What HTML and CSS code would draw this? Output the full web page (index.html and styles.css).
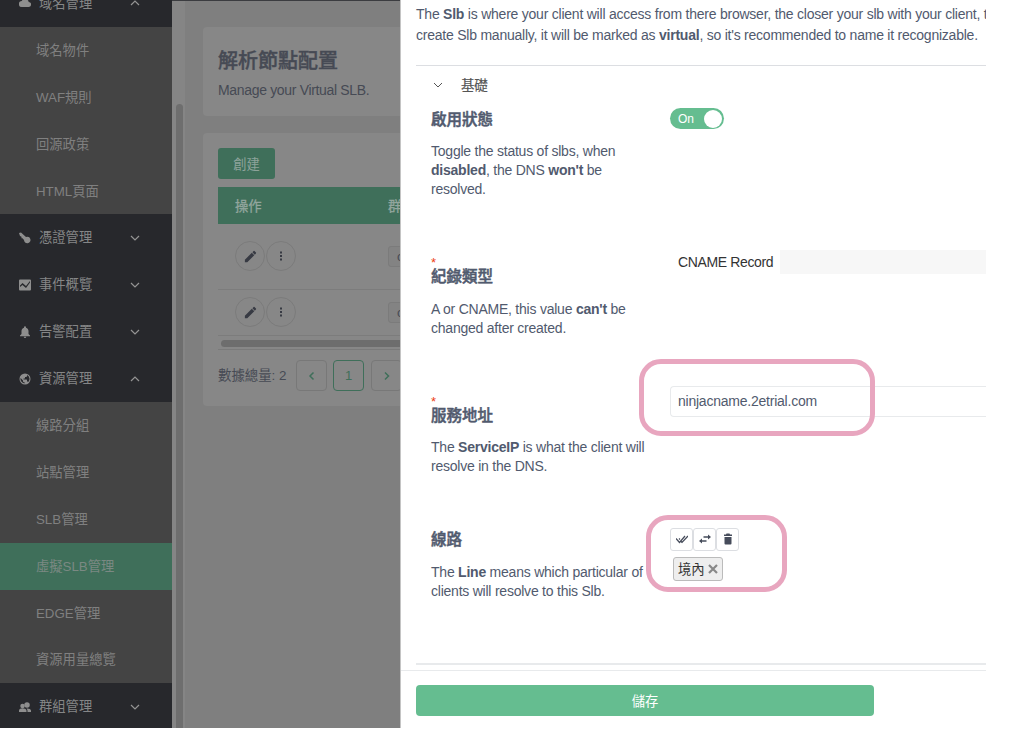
FILE: index.html
```
<!DOCTYPE html>
<html lang="zh-Hant">
<head>
  <meta charset="UTF-8">
  <title>解析節點配置</title>
  <link rel="stylesheet" href="styles.css">
</head>
<body>

  <div class="app">
    <nav class="sidebar">
      <div class="group first">
        <svg class="icon" viewBox="0 0 24 24"><path d="M19.4 10A7.5 7.5 0 0 0 5.4 8 6 6 0 0 0 6 20h13a5 5 0 0 0 .4-10z"/></svg>
        <span>域名管理</span>
        <svg class="arrow" viewBox="0 0 10 10"><path d="M1 7l4-4 4 4"/></svg>
      </div>
      <a class="item">域名物件</a>
      <a class="item">WAF規則</a>
      <a class="item">回源政策</a>
      <a class="item">HTML頁面</a>
      <div class="group">
        <svg class="icon" viewBox="0 0 24 24"><path d="M0 2l4-1 10 9a6.500 6.500 0 1 1-4 6L7 12.500 5 12.500 5 9.500 2 8z"/></svg>
        <span>憑證管理</span>
        <svg class="arrow" viewBox="0 0 10 10"><path d="M1 3l4 4 4-4"/></svg>
      </div>
      <div class="group">
        <svg class="icon" viewBox="0 0 24 24"><path fill-rule="evenodd" d="M2 1h20a2 2 0 0 1 2 2v18a2 2 0 0 1-2 2H2a2 2 0 0 1-2-2V3a2 2 0 0 1 2-2zM2 13v3l5-4 7 6 8-11V4l-8 10-7-6z"/></svg>
        <span>事件概覽</span>
        <svg class="arrow" viewBox="0 0 10 10"><path d="M1 3l4 4 4-4"/></svg>
      </div>
      <div class="group">
        <svg class="icon" viewBox="0 0 24 24"><path d="M12 24a2.500 2.500 0 0 0 2.500-2.500h-5A2.500 2.500 0 0 0 12 24zM19 16v-6c0-3.500-2-6-5-6.700V2.500a2 2 0 0 0-4 0v.8C7 4 5 6.500 5 10v6l-3 3v1.500h20V19z"/></svg>
        <span>告警配置</span>
        <svg class="arrow" viewBox="0 0 10 10"><path d="M1 3l4 4 4-4"/></svg>
      </div>
      <div class="group">
        <svg class="icon" viewBox="0 0 24 24"><path d="M12 1a11 11 0 1 0 0 22 11 11 0 0 0 0-22zm-1 19.900A9 9 0 0 1 3.200 10L8 15v1a2 2 0 0 0 3 2zm7.500-2.700A2 2 0 0 0 17 17h-1v-3a1 1 0 0 0-1-1H9v-2h2a1 1 0 0 0 1-1V8h2a2 2 0 0 0 2-2V3.900a9 9 0 0 1 2.500 14.300z"/></svg>
        <span>資源管理</span>
        <svg class="arrow" viewBox="0 0 10 10"><path d="M1 7l4-4 4 4"/></svg>
      </div>
      <a class="item">線路分組</a>
      <a class="item">站點管理</a>
      <a class="item">SLB管理</a>
      <a class="item active">虛擬SLB管理</a>
      <a class="item">EDGE管理</a>
      <a class="item">資源用量總覽</a>
      <div class="group">
        <svg class="icon" viewBox="0 0 24 24"><circle cx="7" cy="10" r="4.500"/><circle cx="16" cy="8" r="5.500"/><path d="M0 22v-3c0-3 4-4.500 7-4.500s8 1.500 8 4.500v3zM17 20c0-2-1-4-2-5 4-.5 9 1 9 4v3h-7z"/></svg>
        <span>群組管理</span>
        <svg class="arrow" viewBox="0 0 10 10"><path d="M1 3l4 4 4-4"/></svg>
      </div>
    </nav>

    <div class="gutter"><div class="thumb"></div></div>

    <main class="main">
      <section class="card head-card">
        <h1>解析節點配置</h1>
        <p>Manage your Virtual SLB.</p>
      </section>

      <section class="card list-card">
        <button class="create">創建</button>
        <div class="table">
          <div class="thead"><span>操作</span><span>群</span></div>
          <div class="trow">
            <div class="actions">
              <div class="round"><svg viewBox="0 0 24 24"><path d="M3 17.200V21h3.800L18 9.900 14.100 6zM20.700 7a1 1 0 0 0 0-1.400l-2.300-2.300a1 1 0 0 0-1.400 0L15.100 5.100 18.900 9z"/></svg></div>
              <div class="round"><svg viewBox="0 0 24 24"><path d="M10 3h4v4h-4zM10 10h4v4h-4zM10 17h4v4h-4z"/></svg></div>
            </div>
            <div class="cell-tag">c</div>
          </div>
          <div class="trow second">
            <div class="actions">
              <div class="round"><svg viewBox="0 0 24 24"><path d="M3 17.200V21h3.800L18 9.900 14.100 6zM20.700 7a1 1 0 0 0 0-1.400l-2.300-2.300a1 1 0 0 0-1.400 0L15.100 5.100 18.900 9z"/></svg></div>
              <div class="round"><svg viewBox="0 0 24 24"><path d="M10 3h4v4h-4zM10 10h4v4h-4zM10 17h4v4h-4z"/></svg></div>
            </div>
            <div class="cell-tag">c</div>
          </div>
          <div class="scroll"><div class="bar"></div></div>
        </div>
        <div class="pager">
          <span class="total">數據總量: 2</span>
          <div class="page"><svg viewBox="0 0 10 10"><path d="M6.500 1.500L3 5l3.500 3.500"/></svg></div>
          <div class="page current">1</div>
          <div class="page next"><svg viewBox="0 0 10 10"><path d="M3 1.500L6.500 5 3 8.500"/></svg></div>
        </div>
      </section>
    </main>

    <aside class="drawer">
      <div class="intro">
        <p>The <b>Slb</b> is where your client will access from there browser, the closer your slb with your client, the</p>
        <p>create Slb manually, it will be marked as <b>virtual</b>, so it's recommended to name it recognizable.</p>
      </div>

      <div class="form">
        <div class="collapse">
          <svg viewBox="0 0 10 10"><path d="M1 3l4 4 4-4"/></svg>
          <span>基礎</span>
        </div>

        <div class="row status">
          <div class="label">
            <h2>啟用狀態</h2>
            <p>Toggle the status of slbs, when <b>disabled</b>, the DNS <b>won't</b> be resolved.</p>
          </div>
          <div class="switch"><span>On</span><i></i></div>
        </div>

        <div class="row type">
          <div class="label">
            <div class="star">*</div>
            <h2>紀錄類型</h2>
            <p>A or CNAME, this value <b>can't</b> be changed after created.</p>
          </div>
          <div class="radio"><span>CNAME Record</span><div class="fill"></div></div>
        </div>

        <div class="row address">
          <div class="label">
            <div class="star">*</div>
            <h2>服務地址</h2>
            <p>The <b>ServiceIP</b> is what the client will resolve in the DNS.</p>
          </div>
          <div class="field">ninjacname.2etrial.com</div>
        </div>

        <div class="row line">
          <div class="label">
            <h2>線路</h2>
            <p>The <b>Line</b> means which particular of clients will resolve to this Slb.</p>
          </div>
          <div class="picker">
            <div class="tools">
              <div class="tool"><svg viewBox="0 0 24 24"><path class="stroke" d="M0 11l7 8L18 6M6 11l2 2M10 17l2 2L24 6"/></svg></div>
              <div class="tool"><svg viewBox="0 0 24 24"><path d="M18 3l6 5-6 5V9.500H9v-3h9zM6 11v3.500h9v3H6V21l-6-5z"/></svg></div>
              <div class="tool"><svg viewBox="0 0 24 24"><path d="M5 8h14v13a2 2 0 0 1-2 2H7a2 2 0 0 1-2-2zM4 3h4l1-2h6l1 2h4v3H4z"/></svg></div>
            </div>
            <div class="tag"><span>境內</span><svg viewBox="0 0 10 10"><path d="M1 1l8 8M9 1L1 9"/></svg></div>
          </div>
        </div>
      </div>

      <div class="footer">
        <button class="save">儲存</button>
      </div>
    </aside>

    <div class="mark mark-address"></div>
    <div class="mark mark-line"></div>
  </div>

</body>
</html>
```
FILE: styles.css
```
* {
  margin: 0;
  padding: 0;
  box-sizing: border-box;
  font-family: "Liberation Sans", "Noto Sans CJK TC", sans-serif;
}

body {
  background: #fff;
  height: 729px;
  overflow: hidden;
}

.app {
  position: relative;
  display: flex;
  width: 986px;
  height: 728px;
  overflow: hidden;
}

/* sidebar */
.sidebar {
  width: 172px;
  flex: none;
  background: #27282c;
  color: #858687;
  font-size: 13.3px;
  overflow: hidden;
}

.group,
.item {
  display: flex;
  align-items: center;
  height: 46.9px;
  padding-bottom: 2px;
}

.group {
  padding-left: 19px;
}

.group.first {
  margin-top: -20px;
}

.group span {
  width: 90px;
  margin-left: 8px;
}

.icon {
  width: 12px;
  height: 12px;
  margin-top: 2px;
  fill: #8e8e8e;
}

.arrow {
  width: 10px;
  height: 10px;
  margin: 2px 0 0 1px;
  fill: none;
  stroke: #949494;
  stroke-width: 1.2;
}

.item {
  padding-left: 36px;
  background: #444;
  color: #808080;
}

.item.active {
  background: #3f6f5a;
  color: #7b8983;
}

.gutter {
  width: 13px;
  flex: none;
  padding: 103px 2px 0 4px;
  background: #858585;
  border-top: 1px solid #3b3c40;
}

.thumb {
  width: 7px;
  height: 640px;
  border-radius: 4px;
  background: #6e6e6e;
}

/* list page */
.main {
  width: 215px;
  flex: none;
  padding: 26px 0 0 18px;
  background: #7f7f7f;
  border-top: 1px solid #3b3c40;
  color: #464a54;
  overflow: hidden;
}

.card {
  padding-left: 15px;
  background: #878787;
  border-radius: 4px 0 0 4px;
  overflow: hidden;
}

.head-card {
  height: 89px;
  padding-top: 19px;
}

.head-card h1 {
  font-size: 20px;
  line-height: 30px;
  font-weight: 500;
  -webkit-text-stroke: 0.4px #464a54;
}

.head-card p {
  margin-top: 4px;
  font-size: 14px;
  letter-spacing: -0.33px;
  line-height: 20px;
}

.list-card {
  height: 273px;
  margin-top: 17px;
  padding-top: 15px;
}

.create {
  display: block;
  width: 57px;
  height: 31px;
  border: none;
  border-radius: 3px;
  background: #3f6f5a;
  color: #8da39a;
  font-size: 13.3px;
}

.table {
  width: 300px;
  margin-top: 8px;
}

.thead {
  display: flex;
  align-items: center;
  height: 37px;
  padding-left: 17px;
  background: #3f6f5a;
  color: #93a69e;
  font-size: 13.3px;
}

.thead span {
  width: 153px;
  flex: none;
  -webkit-text-stroke: 0.3px #93a69e;
}

.trow {
  display: flex;
  align-items: center;
  height: 66px;
  padding-left: 17px;
  border-bottom: 1px solid #7c7c7c;
}

.trow.second {
  height: 46px;
}

.actions {
  display: flex;
  gap: 1px;
  width: 153px;
}

.round {
  display: flex;
  align-items: center;
  justify-content: center;
  width: 30px;
  height: 30px;
  margin-top: -1px;
  border: 1px solid #7b7b7b;
  border-radius: 50%;
}

.round svg {
  width: 15px;
  height: 15px;
  fill: #373a43;
}

.round + .round svg {
  width: 12px;
  height: 12px;
}

.cell-tag {
  width: 40px;
  height: 21px;
  padding: 0 8px;
  border: 1px solid #7b7b7b;
  border-radius: 3px;
  background: #838383;
  font-size: 13px;
  line-height: 20px;
}

.scroll {
  height: 14px;
  padding: 4px 0 0 3px;
  border-bottom: 1px solid #7a7a7a;
}

.bar {
  height: 7px;
  border-radius: 4px;
  background: #6d6d6d;
}

.pager {
  display: flex;
  align-items: center;
  width: 300px;
  margin-top: 10px;
}

.total {
  width: 78px;
  padding-bottom: 3px;
  font-size: 13.4px;
  white-space: nowrap;
}

.page {
  display: flex;
  align-items: center;
  justify-content: center;
  width: 31px;
  height: 31px;
  margin-right: 6px;
  border: 1px solid #787878;
  border-radius: 4px;
  color: #3f6f5a;
  font-size: 13px;
}

.page.current {
  border-color: #3f6f5a;
}

.page.next {
  margin-left: 1px;
}

.page svg {
  width: 10px;
  height: 10px;
  fill: none;
  stroke: #3f6f5a;
  stroke-width: 1.5;
}

/* drawer */
.drawer {
  width: 586px;
  flex: none;
  background: #fff;
  border-left: 1px solid #c4c4c4;
  color: #515a6e;
  font-size: 14px;
  letter-spacing: -0.23px;
  overflow: hidden;
}

.intro {
  height: 65px;
  padding: 4px 0 0 15px;
  line-height: 21px;
  white-space: nowrap;
}

.form {
  height: 600px;
  margin-left: 15px;
  padding-left: 15px;
  border-top: 1px solid #dcdee2;
  border-bottom: 2px solid #e8eaec;
}

.collapse {
  display: flex;
  align-items: center;
  height: 38px;
  padding-left: 2px;
  color: #555;
  font-size: 13.5px;
}

.collapse svg {
  width: 10px;
  height: 10px;
  margin-right: 18px;
  fill: none;
  stroke: #555;
}

.collapse span {
  padding-bottom: 3px;
  -webkit-text-stroke: 0.2px #555;
}

.row {
  display: flex;
}

.label {
  width: 223px;
  margin-right: 16px;
  flex: none;
  line-height: 19px;
}

.label h2 {
  margin-bottom: 11px;
  font-size: 15.5px;
  font-weight: 500;
  letter-spacing: 0;
  line-height: 24px;
  -webkit-text-stroke: 0.5px #515a6e;
}

.star {
  height: 10px;
  color: #ed4014;
  font-size: 13px;
  line-height: 15px;
}

.row.status {
  height: 146px;
  padding-top: 4px;
}

.status p {
  width: 195px;
}

.status h2 {
  margin-bottom: 10px;
}

.switch {
  display: flex;
  align-items: center;
  justify-content: space-between;
  width: 54px;
  height: 21px;
  padding: 0 2px 0 8px;
  border-radius: 11px;
  background: #65bd90;
  color: #fff;
  font-size: 12px;
  letter-spacing: 0;
}

.switch i {
  width: 18px;
  height: 18px;
  border-radius: 50%;
  background: #fff;
}

.row.type {
  height: 136px;
}

.type .label {
  padding-top: 5px;
}

.type p {
  width: 205px;
}

.radio {
  display: flex;
  align-items: center;
  flex: 1;
  height: 24px;
  padding-left: 8px;
  color: #333;
  letter-spacing: -0.36px;
}

.radio span {
  width: 102px;
  padding-bottom: 1px;
}

.fill {
  flex: 1;
  height: 24px;
  background: #f7f7f7;
}

.row.address {
  height: 142px;
}

.address .label {
  padding-top: 8px;
}

.address h2 {
  margin-bottom: 10px;
}

.field {
  flex: 1;
  height: 31px;
  padding-left: 7px;
  border: 1px solid #e8eaec;
  border-right: none;
  border-radius: 4px 0 0 4px;
  line-height: 29px;
}

.tools {
  display: flex;
}

.tool {
  display: flex;
  align-items: center;
  justify-content: center;
  width: 23px;
  height: 23px;
  border: 1px solid #dcdee2;
  border-radius: 3px;
}

.tool svg {
  width: 12px;
  height: 12px;
  margin-bottom: 1px;
  fill: #464c5b;
}

.tool .stroke {
  fill: none;
  stroke: #464c5b;
  stroke-width: 2.4;
}

.tag {
  display: flex;
  align-items: center;
  justify-content: space-between;
  width: 50px;
  height: 24px;
  margin: 6px 0 0 3px;
  padding: 0 4px;
  border: 1px solid #bbb;
  border-radius: 3px;
  background: #eee;
  color: #333;
  font-size: 13.3px;
  letter-spacing: 0;
}

.tag span {
  padding-bottom: 2px;
}

.tag svg {
  width: 10px;
  height: 10px;
  stroke: #888;
  stroke-width: 2.2;
}

.footer {
  margin-top: 5px;
  padding: 14px 0 0 15px;
  border-top: 1px solid #e8eaec;
}

.save {
  display: block;
  width: 458px;
  height: 31px;
  border: none;
  border-radius: 4px;
  background: #65bd90;
  color: #fff;
  font-size: 13.3px;
}

/* highlight frames over the form */
.mark {
  position: absolute;
  border: 5px solid #e8a6bf;
  border-radius: 22px;
}

.mark-address {
  left: 639px;
  top: 359px;
  width: 236px;
  height: 77px;
}

.mark-line {
  left: 646px;
  top: 515px;
  width: 141px;
  height: 77px;
}
```
